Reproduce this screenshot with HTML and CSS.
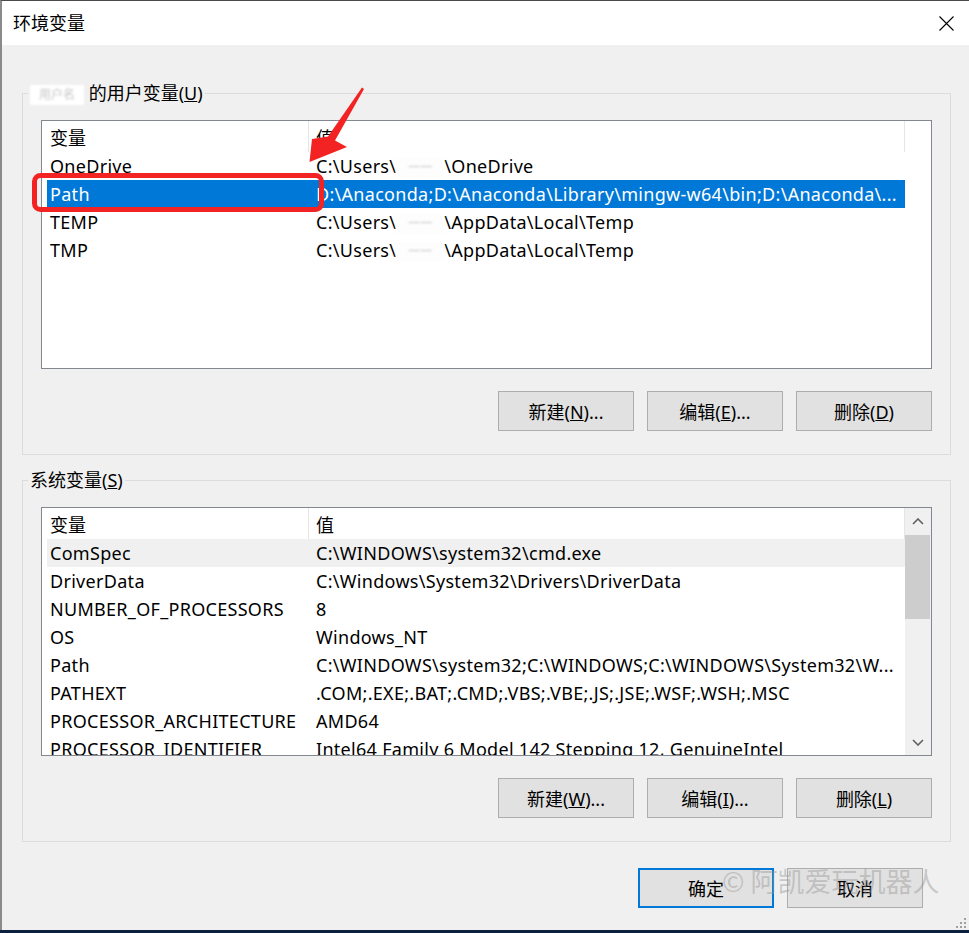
FILE: index.html
```html
<!DOCTYPE html>
<html lang="zh-CN">
<head>
    <meta charset="UTF-8">
    <title>环境变量</title>

    <link rel="stylesheet" href="styles.css">
</head>
<body>
<div class="window">
    <div class="titlebar">
        <span class="title">环境变量</span>
        <svg class="close" width="15" height="15" viewBox="0 0 15 15">
            <path d="M0.5 0.5L14.5 14.5M14.5 0.5L0.5 14.5" stroke="#000" stroke-width="1.1" fill="none"/>
        </svg>
    </div>

    <div class="content">
        <fieldset class="group">
            <legend><span class="smudge legend-smudge">用户名</span> 的用户变量(<u>U</u>)</legend>
            <div class="group-body">
                <div class="list">
                    <div class="list-main">
                        <div class="row head">
                            <div>变量</div>
                            <div>值</div>
                        </div>
                        <div class="row">
                            <div>OneDrive</div>
                            <div>C:\Users\<span class="smudge">一一</span>\OneDrive</div>
                        </div>
                        <div class="row selected">
                            <div>Path</div>
                            <div>D:\Anaconda;D:\Anaconda\Library\mingw-w64\bin;D:\Anaconda\...</div>
                        </div>
                        <div class="row">
                            <div>TEMP</div>
                            <div>C:\Users\<span class="smudge">一一</span>\AppData\Local\Temp</div>
                        </div>
                        <div class="row">
                            <div>TMP</div>
                            <div>C:\Users\<span class="smudge">一一</span>\AppData\Local\Temp</div>
                        </div>
                    </div>
                </div>
                <div class="buttons">
                    <button>新建(<u>N</u>)...</button>
                    <button>编辑(<u>E</u>)...</button>
                    <button>删除(<u>D</u>)</button>
                </div>
            </div>
        </fieldset>

        <fieldset class="group group-system">
            <legend>系统变量(<u>S</u>)</legend>
            <div class="group-body">
                <div class="list">
                    <div class="list-main">
                        <div class="row head">
                            <div>变量</div>
                            <div>值</div>
                        </div>
                        <div class="row hover">
                            <div>ComSpec</div>
                            <div>C:\WINDOWS\system32\cmd.exe</div>
                        </div>
                        <div class="row">
                            <div>DriverData</div>
                            <div>C:\Windows\System32\Drivers\DriverData</div>
                        </div>
                        <div class="row">
                            <div>NUMBER_OF_PROCESSORS</div>
                            <div>8</div>
                        </div>
                        <div class="row">
                            <div>OS</div>
                            <div>Windows_NT</div>
                        </div>
                        <div class="row">
                            <div>Path</div>
                            <div>C:\WINDOWS\system32;C:\WINDOWS;C:\WINDOWS\System32\W...</div>
                        </div>
                        <div class="row">
                            <div>PATHEXT</div>
                            <div>.COM;.EXE;.BAT;.CMD;.VBS;.VBE;.JS;.JSE;.WSF;.WSH;.MSC</div>
                        </div>
                        <div class="row">
                            <div>PROCESSOR_ARCHITECTURE</div>
                            <div>AMD64</div>
                        </div>
                        <div class="row">
                            <div>PROCESSOR_IDENTIFIER</div>
                            <div>Intel64 Family 6 Model 142 Stepping 12, GenuineIntel</div>
                        </div>
                    </div>
                    <div class="scrollbar">
                        <div class="sb-btn">
                            <svg width="12" height="7" viewBox="0 0 12 7"><path d="M1 6L6 1L11 6" stroke="#606060" stroke-width="1.6" fill="none"/></svg>
                        </div>
                        <div class="thumb"></div>
                        <div class="sb-track"></div>
                        <div class="sb-btn">
                            <svg width="12" height="7" viewBox="0 0 12 7"><path d="M1 1L6 6L11 1" stroke="#606060" stroke-width="1.6" fill="none"/></svg>
                        </div>
                    </div>
                </div>
                <div class="buttons">
                    <button>新建(<u>W</u>)...</button>
                    <button>编辑(<u>I</u>)...</button>
                    <button>删除(<u>L</u>)</button>
                </div>
            </div>
        </fieldset>

        <div class="footer">
            <button class="ok">确定</button>
            <button>取消</button>
        </div>
    </div>

    <div class="watermark">© 阿凯爱玩机器人</div>

    <svg class="annotation" width="969" height="930" viewBox="0 0 969 930">
        <rect x="34.5" y="175.5" width="287" height="34" rx="6" fill="none" stroke="#f42323" stroke-width="5"/>
        <polygon points="364,89 335,140.5 347,147 309.5,162 312,139 328,136.5 362,87.5" fill="#f42323"/>
        <g fill="#a0a0a0">
            <rect x="964" y="918" width="2" height="2"/>
            <rect x="960" y="922" width="2" height="2"/>
            <rect x="964" y="922" width="2" height="2"/>
            <rect x="956" y="926" width="2" height="2"/>
            <rect x="960" y="926" width="2" height="2"/>
            <rect x="964" y="926" width="2" height="2"/>
        </g>
    </svg>
</div>
</body>
</html>
```

FILE: styles.css
```css
body {
    margin: 0;
    background: #0b213f;
    font-family: "Noto Sans", "Noto Sans CJK SC", sans-serif;
    font-size: 18px;
    color: #000;
}

.window {
    position: relative;
    width: 967px;
    height: 929px;
    background: #f0f0f0;
    border-top: 1px solid #4a4a4a;
    border-left: 2px solid #8a8a8a;
    overflow: hidden;
}

.titlebar {
    height: 44px;
    background: #fff;
    display: flex;
    align-items: center;
    justify-content: space-between;
    padding: 0 15px 0 11px;
}

.title {
    line-height: 24px;
}

.content {
    padding-left: 20px;
}

/* group boxes */

.group {
    margin: 36px 0 0;
    padding: 0;
    width: 929px;
    box-sizing: border-box;
    min-width: 0;
    border: 1px solid #dcdcdc;
}

.group-system {
    margin-top: 13px;
}

legend {
    margin-left: 5px;
    padding: 0 2px;
    line-height: 24px;
}

.group-body {
    padding: 15px 18px 23px;
}

.smudge {
    display: inline-block;
    width: 48px;
    height: 20px;
    line-height: 20px;
    vertical-align: middle;
    background: #fdfdfd;
    color: #c4c4c4;
    font-size: 12px;
    text-align: center;
    overflow: hidden;
    filter: blur(1.3px);
}

.legend-smudge {
    width: 54px;
    background: #fff;
}

/* list view */

.list {
    height: 249px;
    box-sizing: border-box;
    border: 1px solid #828790;
    background: #fff;
    display: flex;
}

.list-main {
    flex: 1;
    overflow: hidden;
    padding-left: 5px;
}

.row {
    display: grid;
    grid-template-columns: 262px 596px;
    width: 858px;
    height: 28px;
    line-height: 28px;
    letter-spacing: 0.3px;
    white-space: nowrap;
    overflow: hidden;
}

.row > div {
    overflow: hidden;
    padding-left: 7px;
}

.row > div:first-child {
    padding-left: 3px;
}

.row.head {
    height: 31px;
    line-height: 34px;
    letter-spacing: 0;
}

.head > div {
    border-right: 1px solid #e5e5e5;
}

.selected {
    background: #0078d7;
    color: #fff;
}

.hover {
    background: #f0f0f0;
}

.scrollbar {
    width: 26px;
    background: #f0f0f0;
    display: flex;
    flex-direction: column;
}

.sb-btn {
    height: 26px;
    flex: none;
    display: flex;
    align-items: center;
    justify-content: center;
}

.thumb {
    height: 84px;
    margin: 1px 1px 0 0;
    background: #cdcdcd;
}

.sb-track {
    flex: 1;
}

/* buttons */

.buttons, .footer {
    display: flex;
    justify-content: flex-end;
    gap: 13px;
}

.buttons {
    margin-top: 22px;
}

.footer {
    margin-top: 26px;
    width: 929px;
    padding-right: 28px;
    box-sizing: border-box;
}

button {
    width: 136px;
    height: 40px;
    box-sizing: border-box;
    padding: 0;
    background: #e1e1e1;
    border: 1px solid #adadad;
    font: inherit;
    color: #000;
}

.ok {
    border: 2px solid #0078d7;
}

/* overlays */

.watermark {
    position: absolute;
    left: 720px;
    top: 862px;
    font-family: "Noto Sans CJK SC", sans-serif;
    font-size: 27px;
    line-height: 36px;
    color: rgba(150, 150, 150, 0.45);
    white-space: nowrap;
}

.annotation {
    position: absolute;
    left: -2px;
    top: -1px;
    pointer-events: none;
}
```
